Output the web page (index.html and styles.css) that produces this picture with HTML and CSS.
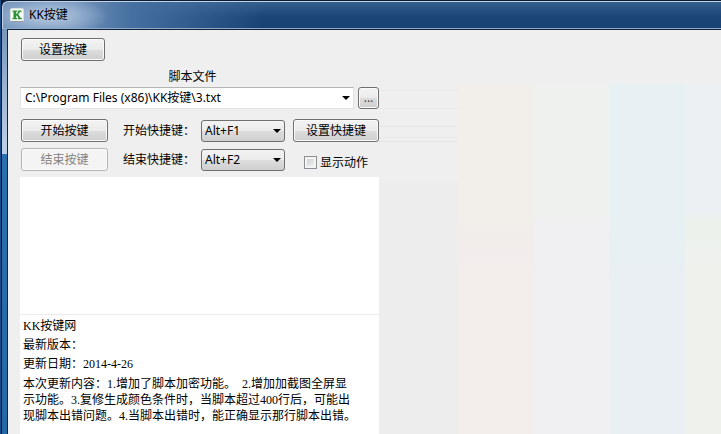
FILE: index.html
```html
<!DOCTYPE html>
<html lang="zh-CN">
<head>
<meta charset="utf-8">
<title>KK按键</title>
<link rel="stylesheet" href="styles.css">
</head>
<body>
<div class="window">
  <header class="titlebar">
    <svg class="app-icon" viewBox="0 0 14 14" aria-hidden="true">
      <rect x="0.5" y="0.5" width="13" height="13" rx="1.5" fill="#f6faf5" stroke="#d9e0d9"/>
      <path d="M1 13.5H13" stroke="#8f9a94"/>
      <path d="M2.5 2.5H7V3.8H6.2V6.2L8.4 3.8H7.7V2.5H11.5V3.8H10.5L8.2 6.1L10.7 9.9H11.8V11.2H8V9.9H8.5L6.8 7.4L6.2 8V9.9H7V11.2H2.5V9.9H3.5V3.8H2.5Z" fill="#2d9236"/>
    </svg>
    <h1 class="title">KK按键</h1>
  </header>
  <main class="client">
    <form class="panel">
      <button type="button" class="btn btn-setup">设置按键</button>
      <label class="file-label" for="file">脚本文件</label>
      <div class="file-row">
        <span class="combo combo-file">
          <select id="file"><option>C:\Program Files (x86)\KK按键\3.txt</option></select>
        </span>
        <button type="button" class="btn btn-browse" aria-label="浏览">...</button>
      </div>
      <div class="controls">
        <button type="button" class="btn">开始按键</button>
        <label for="start-key">开始快捷键：</label>
        <span class="combo"><select id="start-key"><option>Alt+F1</option></select></span>
        <button type="button" class="btn">设置快捷键</button>
        <button type="button" class="btn" disabled>结束按键</button>
        <label for="stop-key">结束快捷键：</label>
        <span class="combo"><select id="stop-key"><option>Alt+F2</option></select></span>
        <label class="check"><input type="checkbox">显示动作</label>
      </div>
      <textarea class="log" aria-label="日志"></textarea>
      <section class="notes">
        <p>KK按键网</p>
        <p>最新版本：</p>
        <p>更新日期：2014-4-26</p>
        <p class="changes">本次更新内容：1.增加了脚本加密功能。&nbsp; 2.增加加截图全屏显<br>示功能。3.复修生成颜色条件时，当脚本超过400行后，可能出<br>现脚本出错问题。4.当脚本出错时，能正确显示那行脚本出错。</p>
      </section>
    </form>
    <div class="backdrop">
      <div class="tint tint-grey"></div>
      <div class="tint tint-warm"></div>
      <div class="tint tint-pale"></div>
      <div class="tint tint-blue"></div>
      <div class="tint tint-green"></div>
    </div>
  </main>
</div>
</body>
</html>
```
FILE: styles.css
```css
* { box-sizing: border-box; }

body {
  margin: 0;
  background: #07142d;
  color: #000;
  font: 12px/16px "Noto Sans", "Noto Sans CJK SC", sans-serif;
}

.window {
  display: flex;
  flex-direction: column;
  min-height: 100vh;
  padding: 1px 0 0 2px;
  background: linear-gradient(90deg, #174a87 1px, #0b1b33 1px);
}

.titlebar {
  display: flex;
  align-items: center;
  gap: 5px;
  height: 28px;
  padding-left: 7px;
  border-top: 1px solid #c5d3e3;
  border-left: 1px solid #c5d3e3;
  border-bottom: 1px solid #8fa9c6;
  border-top-left-radius: 6px;
  background:
    radial-gradient(ellipse 60px 20px at 46px 14px, #a9bfd9 20%, transparent),
    linear-gradient(90deg, #7595bd, #7193bc 70px, #456f9f 130px, transparent 260px),
    linear-gradient(#345f8d, #1b4677 55%, #194274);
}

.app-icon { width: 14px; height: 14px; }

.title {
  margin: 0;
  font-size: 12px;
  font-weight: 400;
}

.client {
  flex: 1;
  display: grid;
  grid-template-columns: minmax(0, 372px) 1fr;
  border-left: 5px solid;
  border-image: linear-gradient(#7796bb, #b9cde4 28%, #b9cde4 31%, #2a6fae 31%, #2468a8) 1;
  box-shadow: inset 1px 1px #10233d;
  background: #efefef;
}

.panel {
  display: flex;
  flex-direction: column;
  padding: 9px 0 0 13px;
}

.btn {
  height: 23px;
  padding: 0;
  border: 1px solid #707070;
  border-radius: 3px;
  background: linear-gradient(#f3f3f3, #ebebeb 50%, #dddddd 50%, #cfcfcf);
  box-shadow: inset 0 0 0 1px #fafafa;
  color: #000;
  font: inherit;
}

.btn:disabled {
  border-color: #b5b5b5;
  background: #f4f4f4;
  color: #838383;
}

.btn-setup { width: 84px; margin-left: 1px; }

.file-label { padding: 8px 14px 2px 0; text-align: center; }

.file-row { display: flex; gap: 4px; }

.btn-browse { width: 21px; height: 22px; color: #444; }

.combo {
  position: relative;
  display: block;
}

.combo::after {
  content: "";
  position: absolute;
  top: 9px;
  right: 4px;
  border: 4px solid transparent;
  border-top-color: #000;
  border-bottom: 0;
  pointer-events: none;
}

.combo select {
  appearance: none;
  width: 100%;
  height: 22px;
  padding: 0 16px 0 3px;
  border: 1px solid #707070;
  border-radius: 3px;
  background: linear-gradient(#f3f3f3, #ebebeb 50%, #dddddd 50%, #cfcfcf);
  color: #000;
  font: inherit;
}

.combo-file { flex: 1; }

.combo-file select {
  padding-left: 4px;
  border-color: #b5b5b5 #e3e3e3 #e3e3e3 #e3e3e3;
  border-radius: 0;
  background: #fff;
}

.controls {
  display: grid;
  grid-template-columns: 87px 1fr 84px 94px;
  row-gap: 6px;
  align-items: center;
  padding: 10px 0 6px 1px;
}

.controls > label { padding-left: 15px; }

.controls > .combo + .btn { margin-left: 8px; }

.controls > .check {
  display: flex;
  align-items: center;
  gap: 3px;
  padding: 6px 0 0 19px;
}

.check input {
  appearance: none;
  width: 13px;
  height: 13px;
  margin: 0;
  border: 1px solid #8a8f94;
  background: linear-gradient(135deg, #c6cbd0, #f6f6f6);
  box-shadow: inset 0 0 0 2px #f4f4f4;
}

.log {
  display: block;
  width: 100%;
  height: 138px;
  padding: 2px;
  border: 0;
  border-bottom: 1px solid #ececec;
  background: #fff;
  resize: none;
}

.notes {
  flex: 1;
  padding: 2px 3px;
  background: #fff;
  font-family: "Liberation Serif", "Noto Sans CJK SC", serif;
  line-height: 19px;
}

.notes p { margin: 0; white-space: nowrap; }

.notes .changes { padding-top: 2px; line-height: 16px; }

.backdrop {
  display: grid;
  grid-template-columns: 79fr 76fr 75fr 76fr 36fr;
  padding-top: 55px;
}

.tint-grey {
  background:
    linear-gradient(#e9e9e9, #e9e9e9) 0 6px / 100% 1px no-repeat,
    linear-gradient(#e9e9e9, #e9e9e9) 0 24px / 100% 1px no-repeat,
    linear-gradient(#e6e6e6, #e6e6e6) 0 42px / 100% 1px no-repeat,
    linear-gradient(#e9e9e9, #e9e9e9) 0 53px / 100% 1px no-repeat,
    linear-gradient(#e6e6e6, #e6e6e6) 0 57px / 100% 1px no-repeat,
    linear-gradient(#efefef 98px, #ededed 98px);
}
.tint-warm { background: linear-gradient(#f2eee9 130px, #f1edeb 150px, #f3edec 190px); }
.tint-pale { background: linear-gradient(#eff1ef 132px, #f0f0f2 136px); }
.tint-blue { background: linear-gradient(#e7f0f3 150px, #e9eff3 190px); }
.tint-green { background: linear-gradient(#ecf0f2 130px, #ecf1ec 136px, #eff1ed 190px); }
```
